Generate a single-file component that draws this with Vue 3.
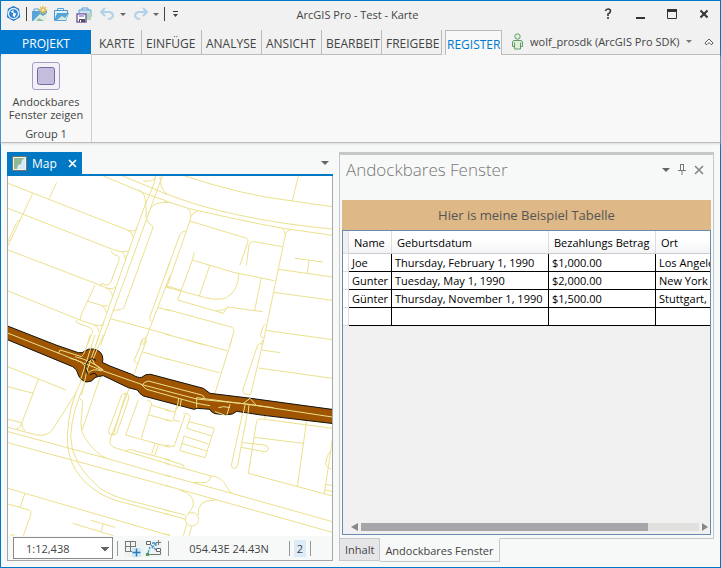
<script setup>
import { ref } from 'vue'

const tabs = ['KARTE', 'EINFÜGE', 'ANALYSE', 'ANSICHT', 'BEARBEIT', 'FREIGEBE']
const scale = ref('1:12,438')
const columns = ['Name', 'Geburtsdatum', 'Bezahlungs Betrag', 'Ort']
const rows = [
  ['Joe', 'Thursday, February 1, 1990', '$1,000.00', 'Los Angeles'],
  ['Gunter', 'Tuesday, May 1, 1990', '$2,000.00', 'New York'],
  ['Günter', 'Thursday, November 1, 1990', '$1,500.00', 'Stuttgart, DE'],
  ['', '', '', '']
]

// Street lines, one list per map tile
const tiles = [
  {
    at: 'translate(0 145) scale(.33333)',
    d: 'M24 115L385 256Q402 262 412 250M148 160L170 112M98 146L24 302M62 226Q52 226 50 232L24 290M24 190L340 314Q365 325 386 318M384 256Q398 262 401 280M24 315L325 430Q338 434 347 426M24 438L245 527L285 540Q300 545 312 538M334 318Q335 326 345 330Q361 332 357 345L335 405Q330 420 318 420L305 415L300 425M365 318Q378 330 376 345M285 420L263 468L245 505L240 525M263 468L300 480Q312 486 324 482M318 430Q335 436 337 452M305 482Q318 490 319 503M280 538Q295 545 297 560M228 525Q230 535 240 537Q280 548 278 560L262 600M467 93Q462 125 437 175L410 250L287 600M487 93L302 600M438 220Q443 235 460 245L372 488Q368 494 338 497M415 135Q432 142 435 160Q440 180 438 220M310 93L440 147L500 168M368 93L470 135L500 148M430 108Q460 112 467 95M480 95Q480 130 500 148M451 190Q462 170 510 172M510 350L450 515Q447 528 455 530M510 392L430 600M499 425L510 430M475 488L510 497M331 521L450 553L510 570M420 600L427 582L440 580'
  },
  {
    at: 'translate(165 145) scale(.33333)',
    d: 'M60 93Q230 150 382 168L502 185M400 93L382 168M0 145Q100 185 220 210Q350 238 502 252M0 168L70 190Q230 228 355 250L502 271M68 190Q80 200 78 215M100 196Q82 203 78 215L74 230L5 428M74 228L245 280Q252 283 248 293L225 360M244 362L252 300Q254 290 265 290L352 305M62 258Q48 260 45 268L0 392M352 250Q360 258 361 270M380 253Q362 258 361 270L293 600M390 340L474 351M432 346L427 384M340 373L502 396M325 442L502 466M301 556L502 584M88 322L82 345L205 382L328 407M82 345L38 465L175 505L188 486L293 500M155 496Q175 498 188 486M134 362L103 453M0 425L103 453Q155 470 185 458Q222 435 221 385M288 402L269 497M0 492L195 545Q210 548 206 562L195 600M0 567L120 600M300 538Q293 540 286 572Q290 580 295 578M5 422L48 436'
  },
  {
    at: 'translate(0 340) scale(.33333)',
    d: 'M24 80L198 150M115 118L65 250M24 140L100 160M24 238L65 248Q66 265 75 272M65 250Q60 264 50 267M24 262L110 285Q145 290 160 265L230 155M24 275L320 355L510 410M24 308L510 440M250 110Q205 190 202 290Q200 400 300 460Q330 478 380 490L510 525M262 115Q215 210 212 290Q212 370 300 445Q330 465 380 480L510 513M240 180Q249 172 247 200L243 250Q240 290 290 335Q305 350 320 355M308 90L247 268M24 445L510 587M75 460L60 503M24 492L85 510Q95 512 93 522L70 587M218 550L340 587M273 541L345 562M310 552L303 575M428 0L403 60Q405 72 414 70L440 0M428 36L510 60M414 70L382 160M365 165Q375 155 385 165Q388 170 385 180L350 280Q340 290 328 282Q325 275 328 265ZM382 160L330 300Q328 320 350 325L510 373M378 158L340 285M415 180L377 285L510 322M440 180Q455 183 455 192L424 294M455 196L510 212M447 225L510 242M377 335Q385 325 395 330L510 360M465 310L455 343M475 313L465 346M30 585L45 585'
  },
  {
    at: 'translate(165 340) scale(.33333)',
    d: 'M65 0L187 32M200 0L145 175M0 55L163 98M278 15Q290 5 292 15L257 165L235 160Q230 155 240 130ZM293 0L290 15M290 30L345 38M280 84L502 115M238 195L200 372Q198 385 208 385Q216 385 218 375L252 195M275 242Q280 235 300 238L502 265M275 242L250 400L502 468M300 225L300 238M425 242L397 440M268 292L415 310M232 308L300 315Q312 320 310 328Q308 335 298 335L228 322M502 300L478 460M497 335Q487 340 482 370Q485 385 500 387M482 433L502 437M478 450L502 454M40 178L25 240L45 245M50 180L33 210M55 222Q70 218 76 230L65 265L140 288M72 245L148 265L120 353L45 332L57 288L130 312M50 310L125 333M60 225L27 320L0 315M0 210L30 216M0 240L25 244M0 358L55 375L57 383M0 370L140 408Q170 410 185 440Q195 460 205 462M0 405L200 460L502 545M0 436L150 478L502 577M137 408Q135 425 120 428L80 428M45 450Q90 465 85 495Q80 510 70 520M100 525Q95 480 150 480M0 510L60 525M0 520L62 538M65 553L55 587M80 560L72 587M0 582L15 585M61 538a20 20 0 1 0 40 0a20 20 0 1 0 -40 0'
  }
]
const highway =
  'M-170 -32L-12 30L55 53Q68 55 75 48Q85 40 98 42Q122 46 127 62Q130 75 127 82L150 93L215 118Q235 130 245 127Q258 115 272 118L430 160L450 175L565 189L830 225V267L610 241L530 229Q520 240 500 239L465 236Q450 230 450 223L412 220L402 223L250 183Q240 178 232 165L205 158L130 122Q112 124 105 128Q95 142 80 141Q60 135 55 120Q52 102 38 95L-170 9Z'
const lanes =
  'M-170 -11L65 82L130 108L250 150L410 192L560 207L830 248M-5 55L0 45L65 65Q75 58 90 0M105 0L60 140M118 0L92 75L80 110L65 180M130 0L98 75Q105 95 128 105M30 70Q70 75 85 110M45 65Q90 75 130 105M85 115Q95 98 125 108M247 152Q250 140 265 138L425 180Q436 184 432 192M245 150L260 163L410 205L450 212M410 188V218M410 188L640 218M510 208L500 242L465 230M475 218Q490 212 510 218M550 205L570 190L590 212M555 210L550 235M567 210L564 237M356 190L352 215M364 192L360 217'
</script>

<template>
  <div class="window">
    <header class="titlebar">
      <nav class="quick" aria-label="Schnellzugriff">
        <svg width="15" height="16" viewBox="0 0 16 17"><path d="M2 3L8 0L14 3L15 12L8 16L1 12Z" fill="#1f76c9" /><circle cx="8" cy="8" r="5.4" fill="#2e83d4" stroke="#dff0ff" stroke-width="1.4" /><path d="M5 6L8 4L8 7L11 8L9 12L7 10L8 8Z" fill="#fff" /></svg>
        <i class="rule"></i>
        <button aria-label="Neues Projekt"><svg width="17" height="16" viewBox="0 0 17 16"><path d="M0 5H15V15H0Z" fill="#57a5d8" /><path d="M2 5V3H7V5" fill="none" stroke="#57a5d8" /><path d="M1 15L8 8L11 10L15 7V15Z" fill="#e4efe1" /><path d="M7 12L12 15H4Z" fill="#8dbfaa" /><path d="M11 0V8M7 4H15M8 1L14 7M14 1L8 7" stroke="#ddbd57" stroke-width="1.3" /><circle cx="11" cy="4" r="2" fill="#fff0a9" stroke="#d8b84e" /></svg></button>
        <button aria-label="Projekt öffnen"><svg width="17" height="16" viewBox="0 0 17 16"><path d="M.5 14V4.500H13.500V7" fill="#e4f0f7" stroke="#489bd2" /><path d="M3.500 4V2.500H9.500V4" fill="none" stroke="#57a5d8" /><path d="M3 7H15L12 15H0Z" fill="#57a5d8" /><path d="M3 14L8 10L11 12L14 8L12 14Z" fill="#d8e9db" /></svg></button>
        <button aria-label="Projekt speichern"><svg width="17" height="17" viewBox="0 0 17 17"><path d="M3 4H15V11H3Z" fill="#cce3ef" stroke="#57a5d8" /><path d="M6 4V2H12V4" fill="none" stroke="#57a5d8" /><path d="M10 8L15 6V14H10Z" fill="#b7d7bb" /><path d="M1 8H10V16H1Z" fill="#fff" stroke="#7864a8" stroke-width="1.5" /><path d="M3 8H8V11H3Z" fill="#b6aad2" /><path d="M3 13H9V16H3Z" fill="#55505d" /><path d="M4 14H5V16H4Z" fill="#fff" /></svg></button>
        <button class="undo" aria-label="Rückgängig"><svg width="15" height="14" viewBox="0 0 15 14"><path d="M5 1L1 5L5 9M1 5H10Q13 6 13 9Q12 12 8 12" fill="none" stroke="#b2d2e8" stroke-width="2" /></svg></button>
        <i class="caret"></i>
        <button class="redo" aria-label="Wiederholen"><svg width="15" height="14" viewBox="0 0 15 14"><path d="M10 1L14 5L10 9M14 5H5Q2 6 2 9Q3 12 7 12" fill="none" stroke="#b2d2e8" stroke-width="2" /></svg></button>
        <i class="caret"></i>
        <i class="rule"></i>
        <button class="more" aria-label="Anpassen"><svg width="7" height="8" viewBox="0 0 7 8"><path d="M1 1.500H6" stroke="#333" /><path d="M1 4H6L3.500 7Z" fill="#444" /></svg></button>
      </nav>
      <h1>ArcGIS Pro - Test - Karte</h1>
      <div class="controls">
        <button aria-label="Hilfe"><svg width="10" height="12" viewBox="0 0 10 12"><path d="M2.500 3Q3 1 5 1Q7.500 1 7.500 3Q7.500 5 5 6V8M5 9V11" fill="none" stroke="#333" stroke-width="1.6" /></svg></button>
        <button aria-label="Minimieren"><svg width="10" height="12" viewBox="0 0 10 12"><path d="M1 10H10" stroke="#333" stroke-width="2" /></svg></button>
        <button aria-label="Maximieren"><svg width="10" height="12" viewBox="0 0 10 12"><path d="M.5 2V10.500H9.500V2" fill="none" stroke="#333" /><path d="M0 2.500H10" stroke="#333" stroke-width="3" /></svg></button>
        <button aria-label="Schließen"><svg width="10" height="12" viewBox="0 0 10 12"><path d="M1.500 2.500L8.500 9.500M8.500 2.500L1.500 9.500" stroke="#333" stroke-width="2" /></svg></button>
      </div>
    </header>

    <nav class="tabs">
      <button class="project">PROJEKT</button>
      <button v-for="t in tabs" :key="t" class="tab">{{ t }}</button>
      <button class="tab current">REGISTER</button>
      <div class="account">
        <svg width="11" height="17" viewBox="0 0 11 17"><g fill="#e0efdd" stroke="#619c63"><circle cx="5.5" cy="3.5" r="2.7" /><path d="M1.5 7.5H9.5L10.5 9V13.5H8.5V16H2.5V13.5H.5V9Z" /><path d="M2.5 9.5V14M8.5 9.5V14" /></g></svg>
        <button class="user">wolf_prosdk (ArcGIS Pro SDK)</button>
        <i class="caret small"></i>
        <button class="collapse" aria-label="Menüband minimieren"><svg width="10" height="8" viewBox="0 0 10 8"><path d="M1 5L5 1L9 5L8 6.500H7L5 4.500L3 6.500H2Z" fill="#fff" stroke="#555" /></svg></button>
      </div>
    </nav>

    <section class="ribbon">
      <div class="group">
        <button class="tool">
          <svg width="28" height="28" viewBox="0 0 28 28"><rect x=".5" y=".5" width="27" height="27" rx="2.5" fill="#f3f1f5" stroke="#a99bcb" /><rect x="5.5" y="5.5" width="17" height="17" rx="2" fill="#c5bddd" stroke="#7d68a7" /></svg>
          <span>Andockbares<br />Fenster zeigen</span>
        </button>
        <span class="caption">Group 1</span>
      </div>
    </section>

    <main class="workspace">
      <section class="mapview">
        <div class="maptabs">
          <div class="maptab">
            <svg width="15" height="15" viewBox="0 0 15 15"><rect x=".5" y=".5" width="14" height="14" fill="#8db996" stroke="#77716f" /><path d="M13 2V13H5L6 9L9 8L10 4Z" fill="#d4ebf7" /><path d="M1.5 1.5H13.5V13.5H1.5Z" fill="none" stroke="#f1f5ed" /></svg>
            <span>Map</span>
            <button aria-label="Karte schließen"><svg width="9" height="9" viewBox="0 0 9 9"><path d="M1 1L8 8M8 1L1 8" stroke="#fff" stroke-width="1.7" /></svg></button>
          </div>
          <i class="caret big"></i>
        </div>
        <div class="mapbody">
          <svg class="map" viewBox="8 176 324 360" preserveAspectRatio="xMinYMin slice">
            <g v-for="t in tiles" :key="t.at" :transform="t.at"><path :d="t.d" class="street" /></g>
            <g transform="translate(60 335) scale(.33333)">
              <path :d="highway" class="highway" />
              <path :d="lanes" class="street" />
              <path d="M82 118Q68 82 95 70L108 76M90 120Q105 108 112 124" fill="none" stroke="#111" stroke-width="3" />
            </g>
          </svg>
          <div class="status">
            <select v-model="scale" aria-label="Maßstab"><option>1:12,438</option></select>
            <i class="bar"></i>
            <div class="maptools">
              <button aria-label="Raster"><svg width="17" height="17" viewBox="0 0 17 17"><path d="M1 1.5H11.5V7M1.5 1V11.500H8M6.500 1V11M1 6.500H11" fill="none" stroke="#777" /><path d="M8 8H17V17H8Z" fill="#d3e8f7" /><path d="M12.500 8.500V16.500M8.500 12.500H16.500" stroke="#287bb8" stroke-width="1.5" /></svg></button>
              <button aria-label="Fangen"><svg width="17" height="17" viewBox="0 0 17 17"><path d="M3 13L5 7M6 5L12 11M7 8L11 3M7 3H11V6" fill="none" stroke="#4598c8" stroke-width="1.300" stroke-dasharray="3 1" /><path d="M1.500 1.500H5.500V4.500H1.500ZM11.500 8.500H15.500V11.500H11.500Z" fill="#fff" stroke="#666" /><path d="M3 14.500H15.500V12M13.500 0V5M11 2.500H16" fill="none" stroke="#777" /><path d="M1 13H4V16H1Z" fill="#4c9d57" /></svg></button>
            </div>
            <i class="bar"></i>
            <span class="coords">054.43E 24.43N</span>
            <i class="bar"></i>
            <span class="count">2</span>
            <i class="bar"></i>
          </div>
        </div>
      </section>

      <section class="dock">
        <div class="pane">
          <div class="panehead">
            <h2>Andockbares Fenster</h2>
            <div class="panetools">
              <i class="caret big"></i>
              <button aria-label="Anheften"><svg width="8" height="11" viewBox="0 0 8 11"><path d="M2 .5H6M2.500 0V6M5.500 0V6M0 6.500H8M4 6V11" fill="none" stroke="#777" /></svg></button>
              <button aria-label="Fenster schließen"><svg width="10" height="10" viewBox="0 0 10 10"><path d="M1 1L9 9M9 1L1 9" stroke="#888" stroke-width="1.700" /></svg></button>
            </div>
          </div>
          <div class="banner">Hier is meine Beispiel Tabelle</div>
          <div class="grid">
            <table>
              <colgroup><col class="c0" /><col class="c1" /><col class="c2" /><col class="c3" /><col class="c4" /></colgroup>
              <thead><tr><td class="mark"></td><th v-for="c in columns" :key="c">{{ c }}</th></tr></thead>
              <tbody>
                <tr v-for="(r, i) in rows" :key="i"><td class="mark"></td><td v-for="(v, j) in r" :key="j">{{ v }}</td></tr>
              </tbody>
            </table>
            <div class="scroll"><i class="left"></i><div class="track"><div class="thumb"></div></div><i class="right"></i></div>
          </div>
        </div>
        <div class="docktabs">
          <button class="docktab">Inhalt</button>
          <button class="docktab active">Andockbares Fenster</button>
        </div>
      </section>
    </main>
  </div>
</template>

<style>
body { margin: 0; }
</style>

<style scoped>
* { box-sizing: border-box; }
.window {
  display: flex;
  flex-direction: column;
  height: 100vh;
  border: 1px solid #0078c8;
  background: #f7f9f8;
  color: #444;
  font-family: "Open Sans", "Noto Sans", sans-serif;
  font-size: 11px;
  line-height: 13px;
}
button { margin: 0; padding: 0; border: 0; background: none; color: inherit; font: inherit; }
svg { display: block; flex: none; }
h1, h2 { margin: 0; font-weight: 400; }
.caret { flex: none; width: 0; border: 3px solid transparent; border-top: 3px solid #666; border-bottom: 0; }
.caret.small { border-top-color: #777; }
.caret.big { border-width: 4px 4px 0; border-top-color: #666; }

.titlebar { display: grid; grid-template-columns: 1fr auto 1fr; align-items: center; height: 29px; padding: 0 11px 3px 5px; background: #f1f1f1; }
.titlebar h1 { font-size: 11px; }
.quick { display: flex; align-items: center; gap: 5px; }
.quick .rule { width: 1px; height: 14px; background: #444; }
.quick .undo { margin-left: 2px; }
.quick .redo { margin-left: 2px; }
.quick .more { margin-left: 2px; }
.controls { display: flex; justify-content: flex-end; gap: 22px; }

.tabs { display: flex; height: 25px; background: #f1f1f1; font-size: 12px; }
.tabs .project { flex: none; width: 90px; height: 24px; background: #0078d0; color: #fff; padding-top: 2px; }
.tabs .tab { flex: none; width: 60px; padding: 2px 0 0 4px; border-right: 1px solid #bbb; border-bottom: 1px solid #bbb; overflow: hidden; text-align: left; white-space: nowrap; }
.tabs .project + .tab { width: 51px; padding-left: 8px; }
.tabs .current { width: 57px; margin-left: 3px; padding-left: 1px; border: 1px solid #bbb; border-bottom: 0; background: #f8f8f8; color: #0078d0; }
.account { display: flex; flex: 1; align-items: center; gap: 7px; padding: 0 6px 1px 10px; border-bottom: 1px solid #bbb; font-size: 11px; white-space: nowrap; }
.account .collapse { margin-left: auto; }

.ribbon { display: flex; height: 88px; border-bottom: 1px solid #bbb; background: #f8f8f8; box-shadow: 0 1px 2px #ddd; }
.group { display: flex; flex-direction: column; align-items: center; width: 91px; padding: 7px 0 2px; border-right: 1px solid #d0d0d0; }
.tool { display: flex; flex-direction: column; align-items: center; gap: 5px; }
.caption { margin-top: auto; }

.workspace { display: grid; grid-template-columns: 326fr 375fr; flex: 1; gap: 6px; min-height: 0; padding: 9px 6px 6px; }
.mapview, .dock, .pane { display: flex; flex-direction: column; min-width: 0; min-height: 0; }
.maptabs { display: flex; align-items: center; justify-content: space-between; height: 24px; padding-right: 4px; border-bottom: 2px solid #0078c3; }
.maptab { display: flex; align-items: center; gap: 5px; height: 22px; padding: 0 5px; background: #0078c3; color: #fff; font-size: 12px; }
.maptab button { margin-left: 6px; }
.mapbody { display: flex; flex: 1; flex-direction: column; min-height: 0; border: 1px solid #a6a6a6; border-top: 0; }
.map { flex: 1; width: 100%; min-height: 0; background: #fff; }
.street { fill: none; stroke: #ebe08c; stroke-width: 3px; }
.highway { fill: #9e5400; stroke: #111; stroke-width: 3px; }
.status { display: flex; flex: none; align-items: center; height: 24px; padding: 0 21px 0 5px; }
.status select { width: 100px; height: 22px; padding: 0 12px; appearance: none; border: 1px solid #888; border-radius: 0; background: linear-gradient(to bottom left, #666 50%, transparent 50%) 87px 9px / 4px 4px no-repeat, linear-gradient(to bottom right, #666 50%, transparent 50%) 91px 9px / 4px 4px no-repeat, #fff; background: linear-gradient(to top right, transparent 50%, #666 50%) 87px 9px / 4px 4px no-repeat, linear-gradient(to top left, transparent 50%, #666 50%) 91px 9px / 4px 4px no-repeat, #fff; color: #444; font: inherit; }
.bar { width: 1px; height: 15px; background: #999; }
.status select + .bar { margin-left: 4px; }
.maptools { display: flex; gap: 4px; margin: 0 6px; background: #eef3f4; }
.coords { flex: 1; text-align: center; white-space: nowrap; }
.count { width: 12px; margin: 0 4px; background: #dcebf8; line-height: 17px; text-align: center; }

.pane { flex: 1; border: 1px solid #c5c8c8; border-top-width: 3px; padding: 0 2px 3px; }
.panehead { display: flex; align-items: flex-start; justify-content: space-between; height: 45px; padding: 5px 7px 0 4px; }
.panehead h2 { color: #777; font-size: 17px; font-weight: 300; line-height: 20px; }
.panetools { display: flex; align-items: center; gap: 8px; margin-top: 4px; }
.banner { background: #deb887; color: #555; font-size: 13px; line-height: 30px; text-align: center; height: 30px; }
.grid { display: flex; flex: 1; flex-direction: column; justify-content: space-between; min-height: 0; overflow: hidden; border: 1px solid #688caf; background: #f0f0f0; }
table { width: 100%; border-collapse: separate; border-spacing: 0; table-layout: fixed; color: #000; }
.c0 { width: 6px; }
.c1 { width: 43px; }
.c2 { width: 157px; }
.c3 { width: 107px; }
th { height: 23px; padding: 0 0 0 5px; border-right: 1px solid #ddd; border-bottom: 1px solid #ccc; background: linear-gradient(#fff 40%, #f2f3f5); font-weight: 400; text-align: left; white-space: nowrap; }
th:last-child, td:last-child { border-right: 0; }
td { height: 18px; padding: 0 0 0 3px; overflow: hidden; border-right: 1px solid #000; border-bottom: 1px solid #000; background: #fff; white-space: nowrap; }
td.mark { padding: 0; border-color: #ddd; }
thead td.mark { background: #f0f0f0; }
.scroll { display: flex; align-items: center; height: 12px; padding: 0 2px 2px 8px; gap: 3px; }
.left, .right { width: 0; border: 4px solid transparent; }
.left { border-left: 0; border-right: 7px solid #888; }
.right { border-right: 0; border-left: 6px solid #888; }
.track { flex: 1; height: 8px; background: #e0e0df; }
.thumb { width: 85%; height: 8px; background: #a6a6aa; }
.docktabs { display: flex; align-items: flex-start; height: 23px; margin-top: -1px; }
.docktab { height: 23px; padding: 0 5px; border: 1px solid #c5c8c8; background: #e6e6e9; }
.docktab.active { height: 24px; border-top-color: #f7f9f8; border-left: 0; background: #f7f9f8; }
</style>
